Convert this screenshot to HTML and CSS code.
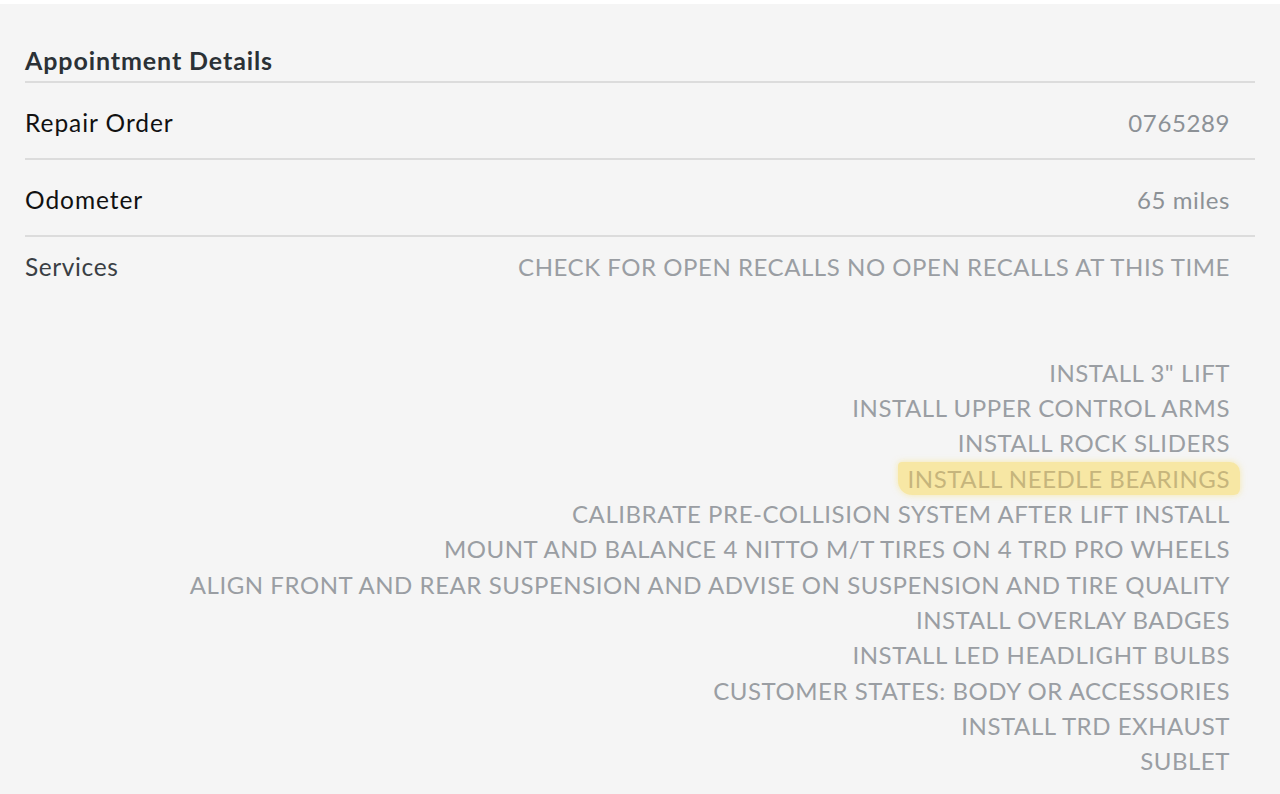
FILE: index.html
```html
<!DOCTYPE html>
<html lang="en">
<head>
    <meta charset="UTF-8">
    <meta name="viewport" content="width=device-width, initial-scale=1.0">
    <title>Appointment Details</title>
    <link rel="stylesheet" href="styles.css">
</head>
<body>
    <div class="details">
        <div class="details-header">
            <h2>Appointment Details</h2>
        </div>
        <div class="detail-row">
            <div class="detail-label">Repair Order</div>
            <div class="detail-value">0765289</div>
        </div>
        <div class="detail-row">
            <div class="detail-label">Odometer</div>
            <div class="detail-value">65 miles</div>
        </div>
        <div class="detail-row services-row">
            <div class="detail-label services-label">Services</div>
            <ul class="services-list">
                <li>CHECK FOR OPEN RECALLS NO OPEN RECALLS AT THIS TIME</li>
                <li class="blank"></li>
                <li class="blank"></li>
                <li>INSTALL 3" LIFT</li>
                <li>INSTALL UPPER CONTROL ARMS</li>
                <li>INSTALL ROCK SLIDERS</li>
                <li><span class="marked">INSTALL NEEDLE BEARINGS</span></li>
                <li>CALIBRATE PRE-COLLISION SYSTEM AFTER LIFT INSTALL</li>
                <li>MOUNT AND BALANCE 4 NITTO M/T TIRES ON 4 TRD PRO WHEELS</li>
                <li>ALIGN FRONT AND REAR SUSPENSION AND ADVISE ON SUSPENSION AND TIRE QUALITY</li>
                <li>INSTALL OVERLAY BADGES</li>
                <li>INSTALL LED HEADLIGHT BULBS</li>
                <li>CUSTOMER STATES: BODY OR ACCESSORIES</li>
                <li>INSTALL TRD EXHAUST</li>
                <li>SUBLET</li>
            </ul>
        </div>
    </div>
</body>
</html>
```

FILE: styles.css
```css
body {
    margin: 0;
    padding: 0;
    font-family: Lato, "Open Sans", sans-serif;
    background-color: #f5f5f5;
    border-top: 4px solid #ffffff;
    height: 790px;
    overflow: hidden;
}
.details {
    padding: 0 25px;
}
.details-header {
    height: 77px;
    display: flex;
    align-items: flex-end;
    border-bottom: 2px solid #dcdcdc;
}
.details-header h2 {
    margin: 0 0 6px;
    font-size: 25px;
    font-weight: 700;
    letter-spacing: 0.9px;
    color: #2b3136;
}
.detail-row {
    display: flex;
    justify-content: space-between;
    align-items: center;
    height: 75px;
    padding: 0 25px 0 0;
    border-bottom: 2px solid #dcdcdc;
    font-size: 24.5px;
}
.detail-label {
    color: #111111;
    letter-spacing: 0.95px;
    padding-top: 4px;
}
.detail-value {
    color: #8c9196;
    font-size: 24px;
    letter-spacing: 0.6px;
    padding-top: 4px;
}
.services-row {
    height: auto;
    align-items: flex-start;
    border-bottom: none;
    padding-top: 12px;
}
.services-label {
    color: #3a3f44;
    letter-spacing: 0.6px;
    padding-top: 0;
    line-height: 35.3px;
}
.services-list {
    list-style: none;
    margin: 0;
    padding: 0;
    text-align: right;
    color: #9a9ea3;
    font-size: 24px;
    letter-spacing: 0.55px;
    line-height: 35.3px;
}
.services-list .blank {
    height: 35.3px;
}
.marked {
    color: #c6b57c;
    background-color: rgba(248, 222, 110, 0.6);
    border-radius: 4px 10px 6px 14px;
    padding: 2px 10px;
    margin-right: -10px;
    box-shadow: 0 0 6px rgba(248, 222, 110, 0.55);
}
```
